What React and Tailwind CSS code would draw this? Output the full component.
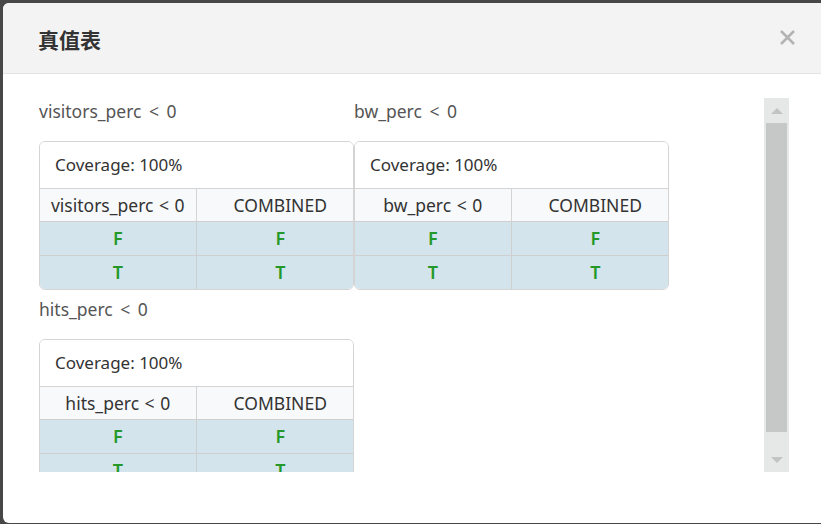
import React from "react";

const blocks = [
  { name: "visitors_perc < 0", rows: ["F", "T"] },
  { name: "bw_perc < 0", rows: ["F", "T"] },
  { name: "hits_perc < 0", rows: ["F", "T"] },
];

// Single truth table block: label + card
const TruthBlock = ({ block }) => (
  <div className="w-[315px] pt-[1px]">
    <div className="h-[24px] leading-[24px] text-[17.5px] text-[#555] [word-spacing:3px]">{block.name}</div>
    <div className="mt-[18px] border border-[#d4d4d4] rounded-[6px] overflow-hidden">
      <div className="h-[46px] flex items-center pl-[15px] text-[17px] text-[#333] bg-white">
        Coverage: 100%
      </div>
      <div className="grid grid-cols-2 h-[33px] bg-[#f8f9fb] border-t border-[#d4d4d4] text-[17.5px] text-[#333]">
        <div className="flex items-center justify-center border-r border-[#d4d4d4] [word-spacing:1px]">{block.name}</div>
        <div className="flex items-center justify-center pl-[11px]">COMBINED</div>
      </div>
      {block.rows.map((r, i) => (
        <div key={i} className="grid grid-cols-2 h-[34px] bg-[#d4e4ec] border-t border-[#cfcfcf] text-[18px] font-semibold text-[#24992a]">
          <div className="flex items-center justify-center border-r border-[#cfcfcf]">{r}</div>
          <div className="flex items-center justify-center pl-[11px]">{r}</div>
        </div>
      ))}
    </div>
  </div>
);

const App = () => {
  return (
    <div
      className="w-[821px] h-[524px] bg-[#474747] pt-[3px] pl-[3px] overflow-hidden"
      style={{ fontFamily: '"Noto Sans", "Noto Sans CJK SC", sans-serif' }}
    >
      <div className="w-[830px] h-[520px] bg-white rounded-[6px] overflow-hidden flex flex-col">
        {/* Header */}
        <div className="h-[71px] shrink-0 bg-[#f3f3f3] border-b border-[#e4e4e4] flex items-center justify-between pl-[35px] pr-[37px]">
          <span className="text-[21px] font-bold text-[#333] mt-[5px]">真值表</span>
          <svg width="17" height="17" viewBox="0 0 17 17" className="mt-[-1px]">
            <path d="M2 2 L15 15 M15 2 L2 15" stroke="#b3b3b3" strokeWidth="2.6" />
          </svg>
        </div>

        {/* Body */}
        <div className="flex pl-[36px] pt-[24px]">
          <div className="w-[725px] h-[374px] overflow-hidden">
            <div className="flex flex-wrap w-[630px] gap-y-[6px]">
              {blocks.map((b, i) => (
                <TruthBlock key={i} block={b} />
              ))}
            </div>
          </div>

          {/* Scrollbar */}
          <div className="w-[25px] h-[374px] bg-[#e6e7e7] flex flex-col items-center">
            <div className="h-[25px] w-full flex items-center justify-center">
              <div className="w-0 h-0 border-l-[6px] border-r-[6px] border-b-[6px] border-l-transparent border-r-transparent border-b-[#c3c3c3]" />
            </div>
            <div className="w-[21px] h-[309px] bg-[#c5c8c7]" />
            <div className="flex-1 w-full flex items-end justify-center pb-[9px]">
              <div className="w-0 h-0 border-l-[6px] border-r-[6px] border-t-[6px] border-l-transparent border-r-transparent border-t-[#c3c3c3]" />
            </div>
          </div>
        </div>
      </div>
    </div>
  );
};

export default App;
